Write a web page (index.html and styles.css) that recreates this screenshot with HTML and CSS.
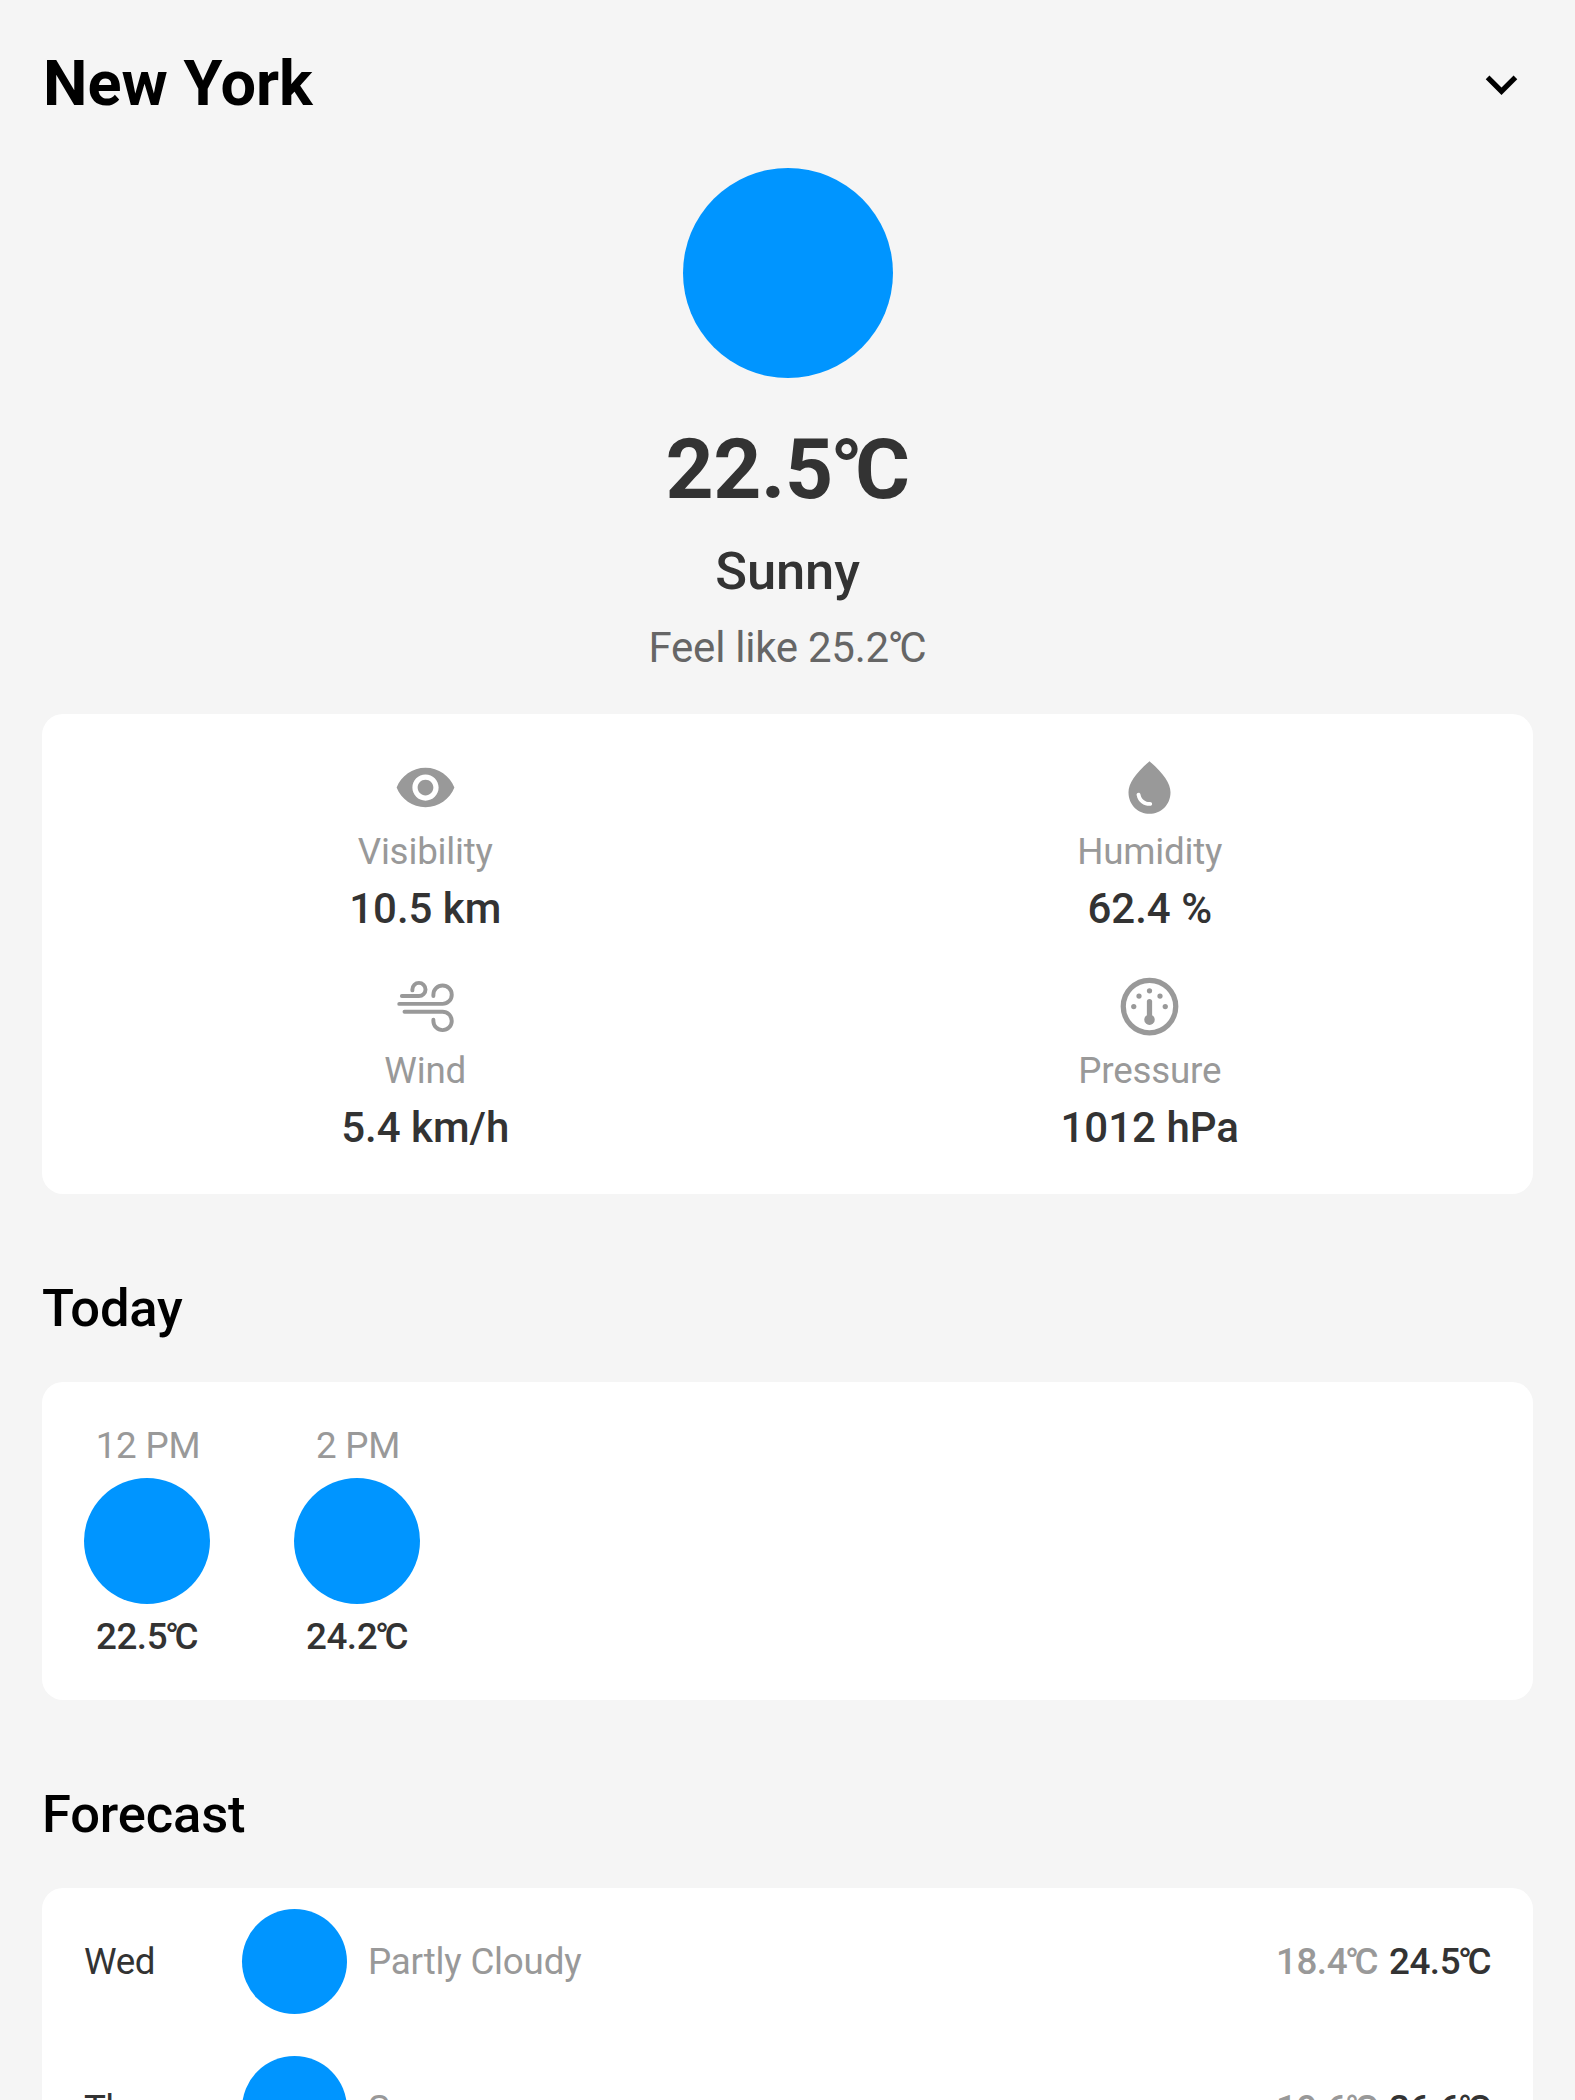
FILE: index.html
```html
<!DOCTYPE html>
<html lang="en">
<head>
<meta charset="utf-8">
<title>Weather</title>
<link rel="stylesheet" href="styles.css">
</head>
<body>
<header class="header">
  <h1 class="city">New York</h1>
  <svg class="icon" viewBox="0 0 24 24"><path d="M7.41 8.59 12 13.17l4.59-4.58L18 10l-6 6-6-6z"/></svg>
</header>
<section class="current">
  <div class="dot dot-large"></div>
  <div class="temperature">22.5<span class="degree">°</span>C</div>
  <div class="condition">Sunny</div>
  <div class="feels">Feel like 25.2<span class="degree">°</span>C</div>
</section>
<section class="card details">
  <div class="detail">
    <svg class="icon" viewBox="0 0 24 24"><path d="M12 4.500C7 4.500 2.730 7.610 1 12c1.730 4.390 6 7.500 11 7.500s9.270-3.110 11-7.500c-1.730-4.390-6-7.500-11-7.500zM12 17c-2.760 0-5-2.240-5-5s2.240-5 5-5 5 2.240 5 5-2.240 5-5 5zm0-8c-1.660 0-3 1.340-3 3s1.340 3 3 3 3-1.340 3-3-1.340-3-3-3z"/></svg>
    <div class="label">Visibility</div>
    <div class="value">10.5 km</div>
  </div>
  <div class="detail">
    <svg class="icon" viewBox="0 0 24 24"><path d="M12 2c-5.330 4.550-8 8.480-8 11.800 0 4.980 3.800 8.200 8 8.200s8-3.220 8-8.200c0-3.320-2.670-7.250-8-11.800zM7.830 14c.37 0 .67.26.74.62.41 2.220 2.280 2.980 3.640 2.870.43-.02.79.32.79.75 0 .4-.32.73-.72.75-2.130.13-4.620-1.090-5.190-4.120-.08-.45.28-.87.74-.87z"/></svg>
    <div class="label">Humidity</div>
    <div class="value">62.4 %</div>
  </div>
  <div class="detail">
    <svg class="icon icon-line" viewBox="0 0 24 24"><path d="M3 8h6.500A2.500 2.500 0 1 0 7 5.500v.36M2 11h16.500A3.500 3.500 0 1 0 15 7.500V8M4 14h14.500a3.500 3.500 0 1 1-3.500 3.500V17"/></svg>
    <div class="label">Wind</div>
    <div class="value">5.4 km/h</div>
  </div>
  <div class="detail">
    <svg class="icon" viewBox="0 0 24 24"><circle class="ring" cx="12" cy="12" r="10"/><circle cx="12" cy="6" r="1"/><circle cx="8" cy="8" r="1"/><circle cx="16" cy="8" r="1"/><circle cx="6" cy="12" r="1"/><circle cx="18" cy="12" r="1"/><circle cx="12" cy="17" r="2"/><path class="ring" stroke-linecap="round" d="M12 10.100V16"/></svg>
    <div class="label">Pressure</div>
    <div class="value">1012 hPa</div>
  </div>
</section>
<h2 class="heading">Today</h2>
<section class="card hours">
  <div class="hour">
    <div class="label">12 PM</div>
    <div class="dot dot-medium"></div>
    <div class="temp">22.5<span class="degree">°</span>C</div>
  </div>
  <div class="hour">
    <div class="label">2 PM</div>
    <div class="dot dot-medium"></div>
    <div class="temp">24.2<span class="degree">°</span>C</div>
  </div>
</section>
<h2 class="heading">Forecast</h2>
<section class="card days">
  <div class="day">
    <div class="day-name">Wed</div>
    <div class="dot dot-small"></div>
    <div class="label day-condition">Partly Cloudy</div>
    <div class="temp temp-low">18.4<span class="degree">°</span>C</div>
    <div class="temp">24.5<span class="degree">°</span>C</div>
  </div>
  <div class="day">
    <div class="day-name">Thu</div>
    <div class="dot dot-small"></div>
    <div class="label day-condition">Sunny</div>
    <div class="temp temp-low">19.6<span class="degree">°</span>C</div>
    <div class="temp">26.6<span class="degree">°</span>C</div>
  </div>
</section>
</body>
</html>
```
FILE: styles.css
```css
* { box-sizing: border-box; }
html { overflow: hidden; }
body {
  margin: 0;
  height: 2100px;
  overflow: hidden;
  padding: 0 42px;
  background: #f5f5f5;
  color: #333;
  font-family: Roboto, "Noto Sans", sans-serif;
}
.header {
  display: flex;
  align-items: center;
  justify-content: space-between;
  height: 168px;
  color: #000;
}
.city { margin: 0 0 0 1px; font-size: 63px; line-height: 74px; font-weight: 700; }
.icon { display: block; width: 63px; height: 63px; fill: currentColor; }
.icon-line { fill: none; stroke: currentColor; stroke-width: 1.5; stroke-linecap: round; }
.ring { fill: none; stroke: currentColor; stroke-width: 2; }
.dot { flex: none; border-radius: 50%; background: #0095ff; }
.dot-large { width: 210px; height: 210px; }
.dot-medium { width: 126px; height: 126px; }
.dot-small { width: 105px; height: 105px; }
.degree { margin: 0 -0.09em 0 -0.03em; }
.current { display: flex; flex-direction: column; align-items: center; height: 546px; }
.temperature { margin-top: 43px; font-size: 84px; line-height: 98px; font-weight: 700; letter-spacing: -0.4px; }
.condition { margin-top: 21px; font-size: 52.5px; line-height: 62px; font-weight: 500; letter-spacing: -0.15px; }
.feels { margin-top: 21px; font-size: 42px; line-height: 49px; letter-spacing: -0.25px; color: #666; }
.card { border-radius: 21px; background: #fff; }
.details {
  display: grid;
  grid-template-columns: 1fr 1fr;
  gap: 42px;
  height: 480px;
  padding: 42px;
}
.detail { display: flex; flex-direction: column; align-items: center; gap: 10.5px; color: #999; }
.label { font-size: 36.75px; line-height: 43.5px; letter-spacing: -0.2px; color: #999; }
.value { font-size: 42px; line-height: 49.5px; font-weight: 500; color: #333; }
.heading {
  margin: 83px 0 43px;
  font-size: 52.5px;
  line-height: 62px;
  font-weight: 500;
  letter-spacing: -0.15px;
  color: #000;
}
.hours { display: flex; gap: 84px; height: 318px; padding: 42px; }
.hour { display: flex; flex-direction: column; align-items: center; gap: 10.5px; width: 126px; }
.hour .label { padding-left: 2px; }
.temp { font-size: 36.75px; line-height: 43px; font-weight: 500; letter-spacing: -0.45px; }
.temp .degree { margin: 0 -0.11em 0 -0.06em; }
.temp-low { margin-right: 11px; color: #999; }
.day { display: flex; align-items: center; height: 147px; padding: 0 42px; }
.day-name { width: 157.5px; font-size: 36.75px; line-height: 43px; letter-spacing: -0.4px; }
.day-condition { flex: 1; margin-left: 21.5px; }
```
